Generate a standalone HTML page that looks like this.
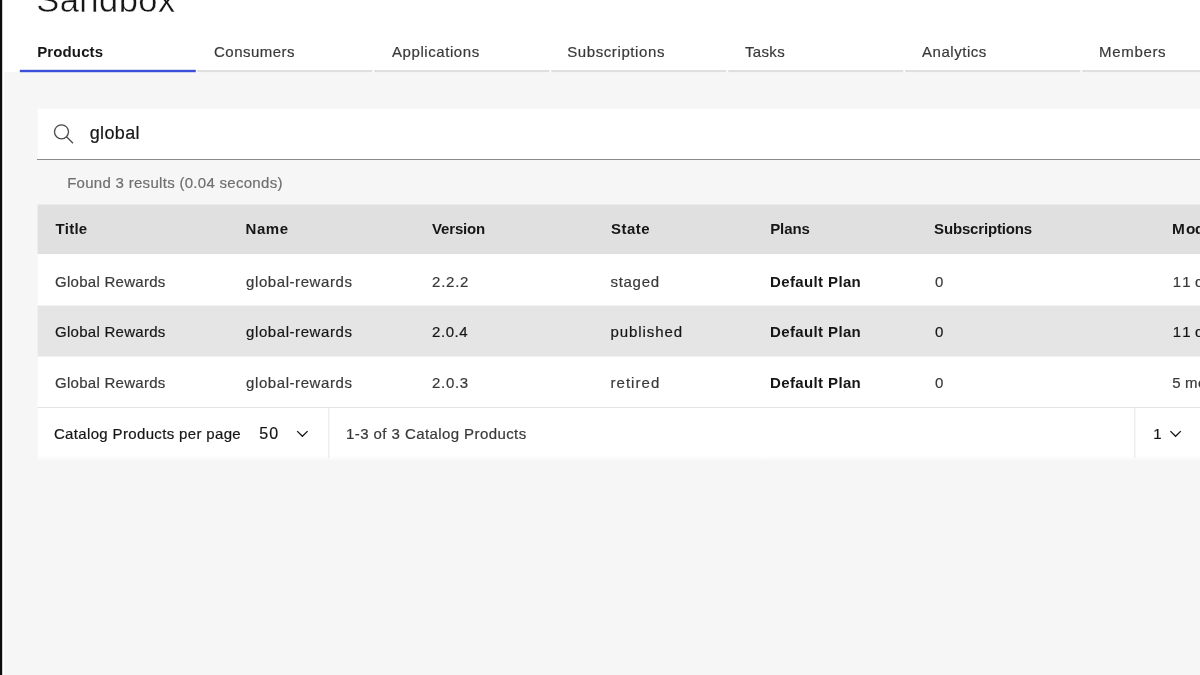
<!DOCTYPE html>
<html><head><meta charset="utf-8"><title>Sandbox</title>
<style>
*{box-sizing:border-box;margin:0;padding:0}
html,body{width:1200px;height:675px;overflow:hidden;background:#fff}
body{font-family:"Liberation Sans",sans-serif;position:relative;color:#161616}
.abs{position:absolute;white-space:nowrap}
#bg{position:absolute;left:0;top:0}
#tx{position:absolute;left:0;top:0;width:1200px;height:675px;will-change:transform;-webkit-text-stroke:0.2px}
</style></head><body>
<svg id="bg" width="1200" height="675" viewBox="0 0 1200 675">
<defs><linearGradient id="pg" x1="0" y1="0" x2="0" y2="1"><stop offset="0" stop-color="#fff"/><stop offset="1" stop-color="#f6f6f6"/></linearGradient></defs>
<rect x="0" y="0" width="2.2" height="675" fill="#0c0c0c"/>
<rect x="4.3" y="72.1" width="1195.7" height="602.9" fill="#f6f6f6"/>
<rect x="19.8" y="69.8" width="176" height="2.4" fill="#3a50d8"/>
<rect x="197.2" y="70" width="175.2" height="2.1" fill="#dfdfdf"/>
<rect x="374.2" y="70" width="175.2" height="2.1" fill="#dfdfdf"/>
<rect x="551.2" y="70" width="175.2" height="2.1" fill="#dfdfdf"/>
<rect x="728.2" y="70" width="175.2" height="2.1" fill="#dfdfdf"/>
<rect x="905.2" y="70" width="175.2" height="2.1" fill="#dfdfdf"/>
<rect x="1082.2" y="70" width="117.8" height="2.1" fill="#dfdfdf"/>
<rect x="37.6" y="108.6" width="1162.4" height="50.4" fill="#fff"/>
<rect x="37" y="159" width="1163" height="1" fill="#8a8a8a"/>
<rect x="37.6" y="204.5" width="1162.4" height="49.7" fill="#e0e0e0"/>
<rect x="37.6" y="254.2" width="1162.4" height="51.4" fill="#fff"/>
<rect x="37.6" y="305.6" width="1162.4" height="51.1" fill="#e5e5e5"/>
<rect x="37.6" y="356.7" width="1162.4" height="50.3" fill="#fff"/>
<rect x="37.6" y="407" width="1162.4" height="1" fill="#e4e4e4"/>
<rect x="37.9" y="408" width="1162.1" height="48" fill="#fff"/>
<rect x="37.9" y="456" width="1162.1" height="5" fill="url(#pg)"/>
<rect x="328.3" y="408" width="1" height="50" fill="#e6e6e6"/>
<rect x="1134.3" y="408" width="1" height="50" fill="#e6e6e6"/>
<g fill="none" stroke="#4a4a4a" stroke-width="1.3"><circle cx="61.5" cy="131.8" r="7"/><path d="M66.5 136.8 L73 143.3"/></g>
<g fill="none" stroke="#161616" stroke-width="1.3"><path d="M297.2 431.1 L302.4 436.3 L307.6 431.1"/><path d="M1170.4 431.1 L1175.6 436.3 L1180.8 431.1"/></g>
</svg>
<div id="tx">
<div class="abs" id="title" style="left:36.20px;top:-19.95px;font-size:34.5px;line-height:40px;letter-spacing:0.467px;color:#161616;-webkit-text-stroke:0.45px #fff;">Sandbox</div>
<div class="abs" id="t1" style="left:37.26px;top:41.55px;font-size:15px;line-height:20px;letter-spacing:0.114px;color:#161616;font-weight:bold;-webkit-text-stroke:0;">Products</div>
<div class="abs" id="t2" style="left:214.05px;top:41.55px;font-size:15px;line-height:20px;letter-spacing:0.469px;color:#393939;">Consumers</div>
<div class="abs" id="t3" style="left:392.00px;top:41.55px;font-size:15px;line-height:20px;letter-spacing:0.568px;color:#393939;">Applications</div>
<div class="abs" id="t4" style="left:567.17px;top:41.55px;font-size:15px;line-height:20px;letter-spacing:0.604px;color:#393939;">Subscriptions</div>
<div class="abs" id="t5" style="left:745.07px;top:41.55px;font-size:15px;line-height:20px;letter-spacing:0.312px;color:#393939;">Tasks</div>
<div class="abs" id="t6" style="left:922.05px;top:41.55px;font-size:15px;line-height:20px;letter-spacing:0.531px;color:#393939;">Analytics</div>
<div class="abs" id="t7" style="left:1099.10px;top:41.55px;font-size:15px;line-height:20px;letter-spacing:0.667px;color:#393939;">Members</div>
<div class="abs" id="stext" style="left:89.68px;top:122.76px;font-size:18px;line-height:20px;letter-spacing:0.360px;color:#161616;">global</div>
<div class="abs" id="found" style="left:67.15px;top:172.80px;font-size:15px;line-height:20px;letter-spacing:0.293px;color:#6f6f6f;">Found 3 results (0.04 seconds)</div>
<div class="abs" id="h1" style="left:55.58px;top:219.40px;font-size:15px;line-height:20px;letter-spacing:0.250px;color:#161616;font-weight:bold;-webkit-text-stroke:0;">Title</div>
<div class="abs" id="h2" style="left:245.52px;top:219.40px;font-size:15px;line-height:20px;letter-spacing:0.567px;color:#161616;font-weight:bold;-webkit-text-stroke:0;">Name</div>
<div class="abs" id="h3" style="left:432.05px;top:219.40px;font-size:15px;line-height:20px;letter-spacing:-0.167px;color:#161616;font-weight:bold;-webkit-text-stroke:0;">Version</div>
<div class="abs" id="h4" style="left:611.07px;top:219.40px;font-size:15px;line-height:20px;letter-spacing:0.438px;color:#161616;font-weight:bold;-webkit-text-stroke:0;">State</div>
<div class="abs" id="h5" style="left:770.13px;top:219.40px;font-size:15px;line-height:20px;letter-spacing:-0.062px;color:#161616;font-weight:bold;-webkit-text-stroke:0;">Plans</div>
<div class="abs" id="h6" style="left:934.10px;top:219.40px;font-size:15px;line-height:20px;letter-spacing:-0.167px;color:#161616;font-weight:bold;-webkit-text-stroke:0;">Subscriptions</div>
<div class="abs" id="h7a" style="left:1172.10px;top:219.26px;font-size:15.4px;line-height:20px;letter-spacing:1.000px;color:#161616;font-weight:bold;-webkit-text-stroke:0;">Mo</div>
<div class="abs" id="h7b" style="left:1195.10px;top:219.40px;font-size:15px;line-height:20px;letter-spacing:0.300px;color:#161616;font-weight:bold;-webkit-text-stroke:0;">dified</div>
<div class="abs" id="r1a" style="left:55.05px;top:271.55px;font-size:15px;line-height:20px;letter-spacing:0.269px;color:#393939;">Global Rewards</div>
<div class="abs" id="r1b" style="left:246.05px;top:271.55px;font-size:15px;line-height:20px;letter-spacing:0.577px;color:#393939;">global-rewards</div>
<div class="abs" id="r1c" style="left:432.05px;top:271.55px;font-size:15px;line-height:20px;letter-spacing:0.750px;color:#393939;">2.2.2</div>
<div class="abs" id="r1d" style="left:610.52px;top:271.55px;font-size:15px;line-height:20px;letter-spacing:0.690px;color:#393939;">staged</div>
<div class="abs" id="r1e" style="left:770.10px;top:271.55px;font-size:15px;line-height:20px;letter-spacing:0.364px;color:#161616;font-weight:bold;-webkit-text-stroke:0;">Default Plan</div>
<div class="abs" id="r1f" style="left:935.05px;top:271.55px;font-size:15px;line-height:20px;letter-spacing:0.000px;color:#393939;">0</div>
<div class="abs" id="r1g" style="left:1172.68px;top:271.55px;font-size:15px;line-height:20px;letter-spacing:2.400px;color:#393939;">11</div>
<div class="abs" id="r1h" style="left:1195.05px;top:271.55px;font-size:15px;line-height:20px;letter-spacing:0.300px;color:#393939;">days ago</div>
<div class="abs" id="r2a" style="left:55.05px;top:322.10px;font-size:15px;line-height:20px;letter-spacing:0.269px;color:#161616;">Global Rewards</div>
<div class="abs" id="r2b" style="left:246.05px;top:322.10px;font-size:15px;line-height:20px;letter-spacing:0.577px;color:#161616;">global-rewards</div>
<div class="abs" id="r2c" style="left:432.05px;top:322.10px;font-size:15px;line-height:20px;letter-spacing:0.550px;color:#161616;">2.0.4</div>
<div class="abs" id="r2d" style="left:610.52px;top:322.10px;font-size:15px;line-height:20px;letter-spacing:0.913px;color:#161616;">published</div>
<div class="abs" id="r2e" style="left:770.10px;top:322.10px;font-size:15px;line-height:20px;letter-spacing:0.364px;color:#161616;font-weight:bold;-webkit-text-stroke:0;">Default Plan</div>
<div class="abs" id="r2f" style="left:935.05px;top:322.10px;font-size:15px;line-height:20px;letter-spacing:0.000px;color:#161616;">0</div>
<div class="abs" id="r2g" style="left:1172.68px;top:322.10px;font-size:15px;line-height:20px;letter-spacing:2.400px;color:#161616;">11</div>
<div class="abs" id="r2h" style="left:1195.05px;top:322.10px;font-size:15px;line-height:20px;letter-spacing:0.300px;color:#161616;">days ago</div>
<div class="abs" id="r3a" style="left:55.05px;top:372.50px;font-size:15px;line-height:20px;letter-spacing:0.269px;color:#393939;">Global Rewards</div>
<div class="abs" id="r3b" style="left:246.05px;top:372.50px;font-size:15px;line-height:20px;letter-spacing:0.577px;color:#393939;">global-rewards</div>
<div class="abs" id="r3c" style="left:432.05px;top:372.50px;font-size:15px;line-height:20px;letter-spacing:0.675px;color:#393939;">2.0.3</div>
<div class="abs" id="r3d" style="left:610.52px;top:372.50px;font-size:15px;line-height:20px;letter-spacing:1.033px;color:#393939;">retired</div>
<div class="abs" id="r3e" style="left:770.10px;top:372.50px;font-size:15px;line-height:20px;letter-spacing:0.364px;color:#161616;font-weight:bold;-webkit-text-stroke:0;">Default Plan</div>
<div class="abs" id="r3f" style="left:935.05px;top:372.50px;font-size:15px;line-height:20px;letter-spacing:0.000px;color:#393939;">0</div>
<div class="abs" id="r3g" style="left:1172.31px;top:372.50px;font-size:15px;line-height:20px;letter-spacing:0.000px;color:#393939;">5</div>
<div class="abs" id="r3h" style="left:1185.10px;top:372.50px;font-size:15px;line-height:20px;letter-spacing:0.300px;color:#393939;">months ago</div>
<div class="abs" id="p1" style="left:53.94px;top:423.80px;font-size:15px;line-height:20px;letter-spacing:0.346px;color:#161616;">Catalog Products per page</div>
<div class="abs" id="p2" style="left:259.31px;top:423.76px;font-size:16px;line-height:20px;letter-spacing:1.100px;color:#161616;">50</div>
<div class="abs" id="p3" style="left:346.10px;top:423.80px;font-size:15px;line-height:20px;letter-spacing:0.417px;color:#393939;">1-3 of 3 Catalog Products</div>
<div class="abs" id="p4" style="left:1153.31px;top:423.80px;font-size:15px;line-height:20px;letter-spacing:0.000px;color:#161616;">1</div>
</div>
</body></html>
